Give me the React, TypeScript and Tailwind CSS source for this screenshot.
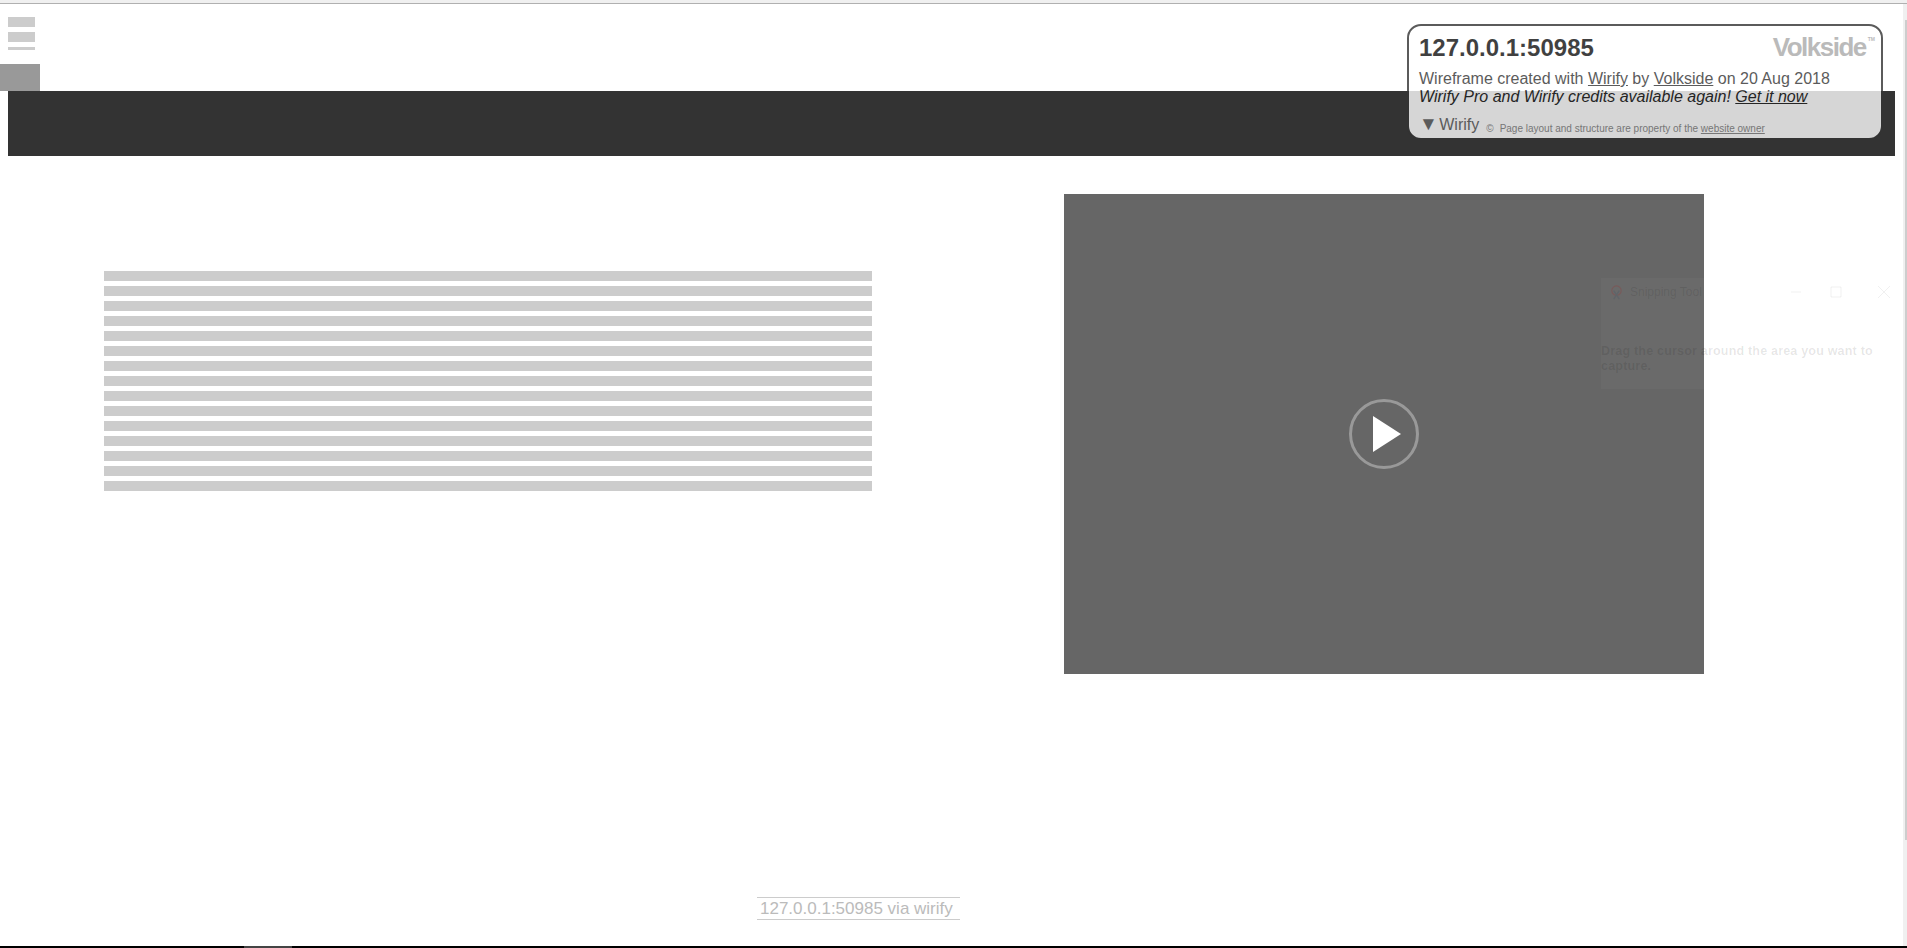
const sansFont = "font-['Liberation_Sans',Arial,sans-serif]";

const textLines = Array.from({ length: 15 }, (_, i) => i);

const WirifyPanel = () => {
  return (
    <div className="absolute left-[1407px] top-[24px] w-[476px] h-[116px] rounded-[14px] border-2 border-[#333] bg-white opacity-80 px-[10px] text-black">
      <div className="flex items-start justify-between h-[44px]">
        <h1 className="text-[24px] leading-[28px] font-bold mt-[8px] text-[#111]">127.0.0.1:50985</h1>
        <div className="flex items-start text-[#aaa] font-bold text-[26px] leading-[30px] tracking-[-1.5px] mt-[6px] -mr-[4px]">
          Volkside<span className="text-[5px] leading-[14px] tracking-normal ml-[2px]">TM</span>
        </div>
      </div>
      <p className="text-[16px] leading-[18px] text-[#333]">
        Wireframe created with <span className="underline">Wirify</span> by <span className="underline">Volkside</span> on 20 Aug 2018
      </p>
      <p className="text-[16px] leading-[18px] italic text-[#222]">
        Wirify Pro and Wirify credits available again! <span className="underline">Get it now</span>
      </p>
      <div className="flex items-end mt-[8px] text-[#666]">
        <span className="text-[16px] leading-[20px]">
          <span className="text-[19px] leading-[20px] -mr-[3px]">▼</span> Wirify
        </span>
        <span className="text-[10px] leading-[12px] ml-[7px] text-[#888]">
          <span className="mr-[6px]">©</span>Page layout and structure are property of the <span className="underline">website owner</span>
        </span>
      </div>
    </div>
  );
};

const SnippingGhost = () => {
  return (
    <div className="absolute left-[1601px] top-[278px] w-[304px] h-[111px] bg-white/[0.03]">
      <div className="flex items-center h-[28px] pl-[8px] text-[12px] text-black/10">
        <svg viewBox="0 0 16 16" className="w-[15px] h-[15px] mr-[6px] opacity-15">
          <circle cx="8" cy="6" r="5" fill="none" stroke="#c00" strokeWidth="1.2" />
          <path d="M5 15l6-9M11 15L5 6" stroke="#246" strokeWidth="1.4" />
        </svg>
        Snipping Tool
        <svg viewBox="0 0 100 12" className="w-[100px] h-[12px] ml-auto mr-[14px] text-black/[0.06]">
          <path d="M0 6h10M40 1h10v10H40zM87 0l12 12M99 0L87 12" fill="none" stroke="currentColor" />
        </svg>
      </div>
      <p className="mt-[38px] w-[290px] text-[12.5px] leading-[15px] font-bold tracking-[0.2px] text-black/[0.1]">
        Drag the cursor around the area you want to capture.
      </p>
    </div>
  );
};

export default function App() {
  return (
    <div className={`relative w-[1907px] h-[948px] overflow-hidden bg-white flex flex-col ${sansFont}`}>
      <div className="h-[4px] shrink-0 bg-[#f0f0f0] border-b border-[#b0b0b0]" />

      <div className="flex flex-col gap-[5px] w-[27px] ml-[8px] mt-[13px]">
        <div className="h-[10px] bg-[#ccc]" />
        <div className="h-[10px] bg-[#ccc]" />
        <div className="h-[3px] bg-[#ccc]" />
      </div>
      <div className="w-[40px] h-[27px] mt-[14px] bg-[#999]" />
      <div className="w-[1887px] h-[65px] ml-[8px] bg-[#333]" />

      <main className="flex items-start mt-[38px] pl-[104px]">
        <div className="w-[768px] mt-[77px] flex flex-col gap-[5px]">
          {textLines.map((line) => (
            <div key={line} className="h-[10px] bg-[#ccc]" />
          ))}
        </div>
        <div className="w-[640px] h-[480px] ml-[192px] bg-[#666] flex items-center justify-center">
          <div className="w-[70px] h-[70px] rounded-full border-[3px] border-[#999] flex items-center justify-center">
            <svg viewBox="0 0 28 36" className="w-[28px] h-[36px] ml-[6px]">
              <path d="M0 0L28 18L0 36Z" fill="#fff" />
            </svg>
          </div>
        </div>
      </main>

      <footer className="w-[203px] h-[23px] mt-[223px] ml-[757px] border-y border-[#ccc] pl-[3px] text-[17px] leading-[21px] text-[#bbb] whitespace-nowrap">
        127.0.0.1:50985 via wirify
      </footer>

      <div className="mt-auto h-[2px] bg-black flex">
        <div className="w-[48px] ml-[244px] bg-[#444]" />
      </div>

      <WirifyPanel />
      <SnippingGhost />

      <div className="absolute right-0 top-[4px] bottom-[2px] w-[4px] bg-[#f0f0f0]">
        <div className="ml-[2px] w-[2px] mt-[16px] h-[820px] bg-[#cdcdcd]" />
      </div>
    </div>
  );
}
